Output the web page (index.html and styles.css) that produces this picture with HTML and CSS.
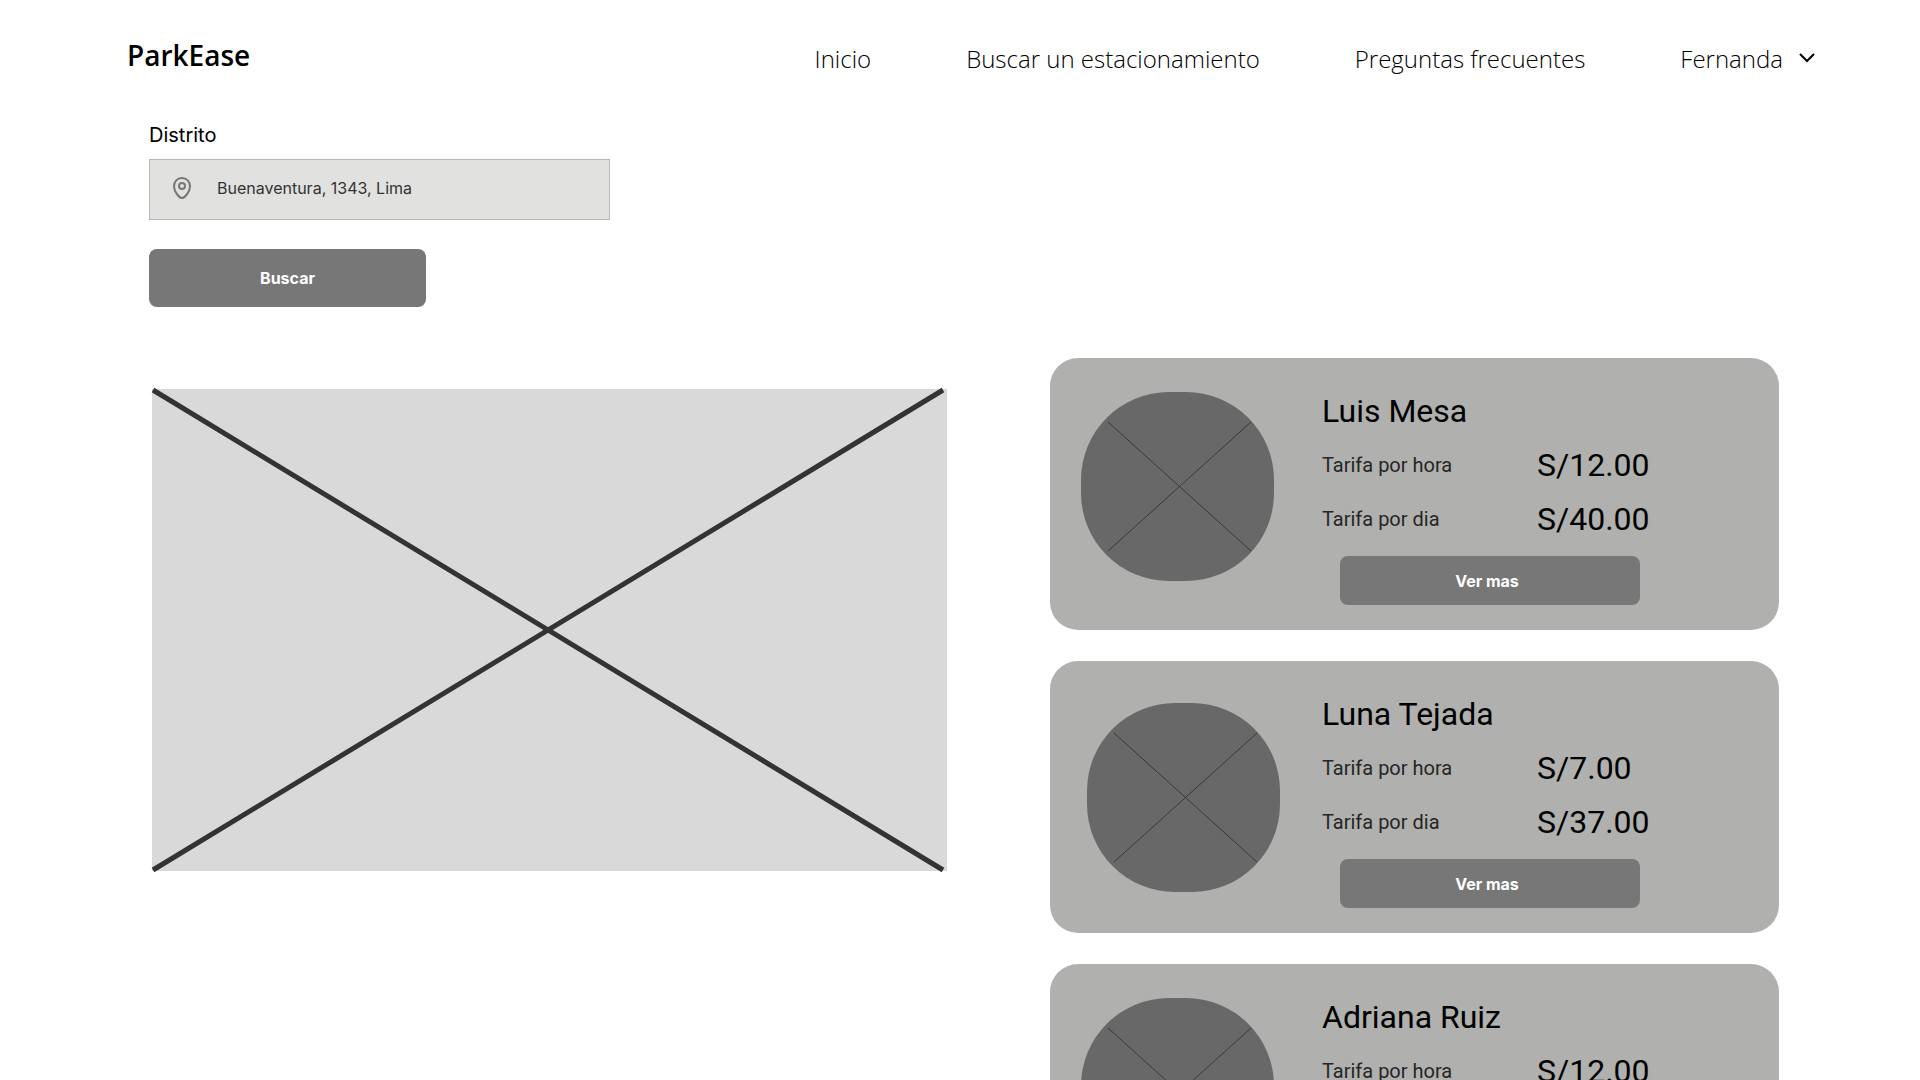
FILE: index.html
```html
<!DOCTYPE html>
<html lang="es">
<head>
<meta charset="utf-8">
<meta name="viewport" content="width=device-width, initial-scale=1">
<title>ParkEase</title>
<link rel="stylesheet" href="styles.css">
</head>
<body>
<div class="page">
  <header class="header">
    <a class="brand" href="#">ParkEase</a>
    <nav class="nav">
      <a href="#">Inicio</a>
      <a href="#">Buscar un estacionamiento</a>
      <a href="#">Preguntas frecuentes</a>
      <button class="user" type="button">Fernanda
        <svg class="chevron" viewBox="0 0 24 24" aria-hidden="true"><path d="M5 7l7 7 7-7"/></svg>
      </button>
    </nav>
  </header>

  <form class="search">
    <label class="search-label" for="district">Distrito</label>
    <div class="field">
      <svg class="pin" viewBox="0 0 24 24" aria-hidden="true"><path d="M12 22c2.200 0 8-5.500 8-11.500C20 5.500 16.800 2 12 2S4 5.500 4 10.500C4 16.500 9.800 22 12 22z"/><circle cx="12" cy="10" r="3"/></svg>
      <input id="district" type="text" value="Buenaventura, 1343, Lima">
    </div>
    <button class="button search-button" type="button">Buscar</button>
  </form>

  <main class="content">
    <svg class="map" viewBox="0 0 795 482" role="img" aria-label="Mapa"><rect width="795" height="482"/><path d="M1 1L791 481M1 481L791 1"/></svg>

    <div class="results">
      <article class="card">
        <div class="photo"><svg class="avatar" viewBox="0 0 193 189" aria-hidden="true"><rect width="193" height="189" rx="88"/><path d="M27 30L170 159M27 159L170 30"/></svg></div>
        <div class="details">
          <h2 class="name">Luis Mesa</h2>
          <dl class="rates">
            <dt>Tarifa por hora</dt><dd>S/12.00</dd>
            <dt>Tarifa por dia</dt><dd>S/40.00</dd>
          </dl>
          <button class="button more" type="button">Ver mas</button>
        </div>
      </article>

      <article class="card">
        <div class="photo photo-centered"><svg class="avatar" viewBox="0 0 193 189" aria-hidden="true"><rect width="193" height="189" rx="88"/><path d="M27 30L170 159M27 159L170 30"/></svg></div>
        <div class="details">
          <h2 class="name">Luna Tejada</h2>
          <dl class="rates">
            <dt>Tarifa por hora</dt><dd>S/7.00</dd>
            <dt>Tarifa por dia</dt><dd>S/37.00</dd>
          </dl>
          <button class="button more" type="button">Ver mas</button>
        </div>
      </article>

      <article class="card">
        <div class="photo"><svg class="avatar" viewBox="0 0 193 189" aria-hidden="true"><rect width="193" height="189" rx="88"/><path d="M27 30L170 159M27 159L170 30"/></svg></div>
        <div class="details">
          <h2 class="name">Adriana Ruiz</h2>
          <dl class="rates">
            <dt>Tarifa por hora</dt><dd>S/12.00</dd>
          </dl>
        </div>
      </article>
    </div>
  </main>
</div>
</body>
</html>
```
FILE: styles.css
```css
* {
  box-sizing: border-box;
}

body {
  margin: 0;
  background: #fff;
  color: #000;
  font-family: Inter, sans-serif;
}

.page {
  height: 100vh;
  overflow: auto;
  scrollbar-width: none;
}

.header {
  display: flex;
  justify-content: space-between;
  align-items: center;
  height: 120px;
  padding: 0 101px 10px 127px;
  font-family: "Open Sans", sans-serif;
}

.brand {
  color: #000;
  font-size: 28px;
  font-weight: 600;
  text-decoration: none;
}

.nav {
  display: flex;
  align-items: center;
  gap: 95px;
  padding-top: 8px;
}

.nav a,
.user {
  color: #000;
  font: 300 24px/32px "Open Sans", sans-serif;
  text-decoration: none;
}

.user {
  display: flex;
  align-items: center;
  gap: 12px;
  padding: 0;
  border: 0;
  background: none;
}

.chevron {
  width: 24px;
  height: 24px;
  fill: none;
  stroke: #000;
  stroke-width: 2;
}

.search {
  display: flex;
  flex-direction: column;
  align-items: flex-start;
  padding-left: 149px;
}

.search-label {
  margin-bottom: 9px;
  font-size: 20px;
  line-height: 30px;
}

.field {
  display: flex;
  align-items: center;
  gap: 23px;
  width: 461px;
  height: 61px;
  padding: 0 20px 3px;
  border: 1px solid #b7b7b7;
  background: #e1e1df;
}

.pin {
  flex: none;
  width: 24px;
  height: 24px;
  fill: none;
  stroke: #777;
  stroke-width: 2;
}

.field input {
  flex: 1;
  min-width: 0;
  padding: 0;
  border: 0;
  outline: 0;
  background: none;
  color: #333;
  font: 16px/24px Inter, sans-serif;
}

.button {
  border: 0;
  border-radius: 8px;
  background: #777;
  color: #fff;
  font: 700 16px/24px Inter, sans-serif;
}

.search-button {
  width: 277px;
  height: 58px;
  margin-top: 29px;
}

.content {
  display: grid;
  grid-template-columns: 795fr 729fr;
  gap: 103px;
  align-items: start;
  padding: 51px 141px 0 152px;
}

.map {
  width: 100%;
  margin-top: 31px;
  overflow: visible;
  fill: #d9d9d9;
}

.map path {
  stroke: #333;
  stroke-width: 5;
}

.results {
  display: grid;
  gap: 31px;
}

.card {
  display: flex;
  gap: 36px;
  min-height: 272px;
  padding: 0 31px;
  border-radius: 28px;
  background: #b0b0ae;
}

.photo {
  display: flex;
  flex: none;
  width: 205px;
  padding-top: 34px;
}

.photo-centered {
  align-items: center;
  justify-content: center;
  padding-top: 0;
}

.avatar {
  width: 193px;
  height: 189px;
  fill: #686868;
}

.avatar path {
  stroke: #383838;
}

.details {
  flex: 1;
  padding: 34px 0 25px;
  font-family: Roboto, sans-serif;
}

.name {
  margin: 0 0 16px;
  font-size: 32px;
  font-weight: 400;
  line-height: 38px;
}

.rates {
  display: grid;
  grid-template-columns: 215px 1fr;
  row-gap: 16px;
  align-items: center;
  margin: 0 0 18px;
}

.rates dt {
  color: #262626;
  font-size: 20px;
  line-height: 24px;
}

.rates dd {
  margin: 0;
  font-size: 32px;
  line-height: 38px;
}

.more {
  display: block;
  width: 300px;
  height: 49px;
  margin-left: 18px;
  padding: 0 12px 0 6px;
}
```
